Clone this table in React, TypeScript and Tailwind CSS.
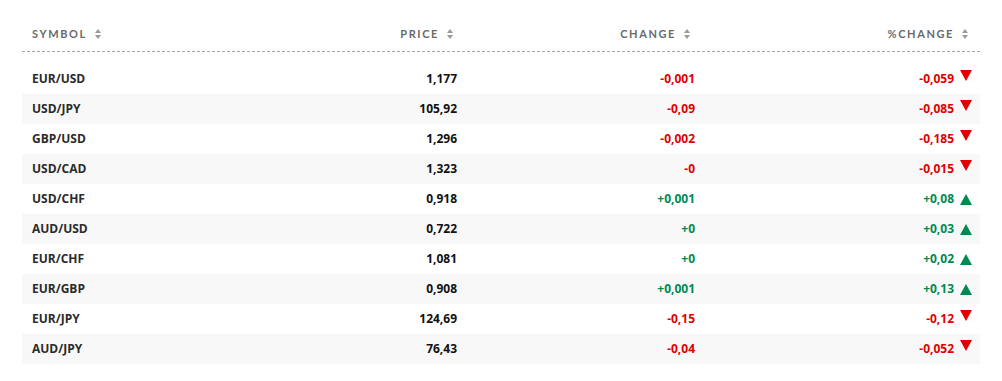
import React from "react";

type Quote = {
  symbol: string;
  price: string;
  change: string;
  pct: string;
};

const quotes: Quote[] = [
  { symbol: "EUR/USD", price: "1,177", change: "-0,001", pct: "-0,059" },
  { symbol: "USD/JPY", price: "105,92", change: "-0,09", pct: "-0,085" },
  { symbol: "GBP/USD", price: "1,296", change: "-0,002", pct: "-0,185" },
  { symbol: "USD/CAD", price: "1,323", change: "-0", pct: "-0,015" },
  { symbol: "USD/CHF", price: "0,918", change: "+0,001", pct: "+0,08" },
  { symbol: "AUD/USD", price: "0,722", change: "+0", pct: "+0,03" },
  { symbol: "EUR/CHF", price: "1,081", change: "+0", pct: "+0,02" },
  { symbol: "EUR/GBP", price: "0,908", change: "+0,001", pct: "+0,13" },
  { symbol: "EUR/JPY", price: "124,69", change: "-0,15", pct: "-0,12" },
  { symbol: "AUD/JPY", price: "76,43", change: "-0,04", pct: "-0,052" },
];

const SortIcon = () => (
  <svg width="6" height="10" viewBox="0 0 6 10" className="ml-[8px] shrink-0">
    <path d="M3 0 L6 4 L0 4 Z" fill="#9a9a9a" />
    <path d="M0 6 L6 6 L3 10 Z" fill="#9a9a9a" />
  </svg>
);

const Arrow = ({ up }: { up: boolean }) =>
  up ? (
    <svg width="12" height="11" viewBox="0 0 12 11" className="ml-[6px]">
      <path d="M6 0 L12 11 L0 11 Z" fill="#008a4f" />
    </svg>
  ) : (
    <svg width="12" height="11" viewBox="0 0 12 11" className="ml-[6px] -mt-[7px]">
      <path d="M0 0 L12 0 L6 11 Z" fill="#e00000" />
    </svg>
  );

const cols = "grid grid-cols-[205px_240px_238px_277px]";

export default function App() {
  return (
    <div className="w-[1002px] h-[381px] bg-white px-[22px] pt-[17px]">
      <div className={`${cols} h-[35px] items-center border-b border-dashed border-[#a6a6a6] font-['Lato',sans-serif] text-[11px] font-bold tracking-[1.6px] text-[#6a6a6a]`}>
        <div className="flex items-center pl-[10px]">
          SYMBOL <SortIcon />
        </div>
        <div className="flex items-center justify-end pr-[14px]">
          PRICE <SortIcon />
        </div>
        <div className="flex items-center justify-end pr-[15px]">
          CHANGE <SortIcon />
        </div>
        <div className="flex items-center justify-end pr-[14px]">
          %CHANGE <SortIcon />
        </div>
      </div>
      <div className="mt-[12px] font-['Open_Sans',sans-serif]">
        {quotes.map((q, i) => {
          const up = q.change.startsWith("+");
          const color = up ? "text-[#008a4f]" : "text-[#e00000]";
          return (
            <div
              key={q.symbol}
              className={`${cols} h-[30px] items-center text-[12px] font-bold ${i % 2 === 1 ? "bg-[#f8f8f8]" : "bg-white"}`}
            >
              <div className="pl-[10px] text-[#2b2b2b]">{q.symbol}</div>
              <div className="pr-[10px] text-right text-[#111]">{q.price}</div>
              <div className={`pr-[10px] text-right ${color}`}>{q.change}</div>
              <div className={`pr-[10px] flex items-center justify-end ${color}`}>
                {q.pct}
                <Arrow up={up} />
              </div>
            </div>
          );
        })}
      </div>
    </div>
  );
}
